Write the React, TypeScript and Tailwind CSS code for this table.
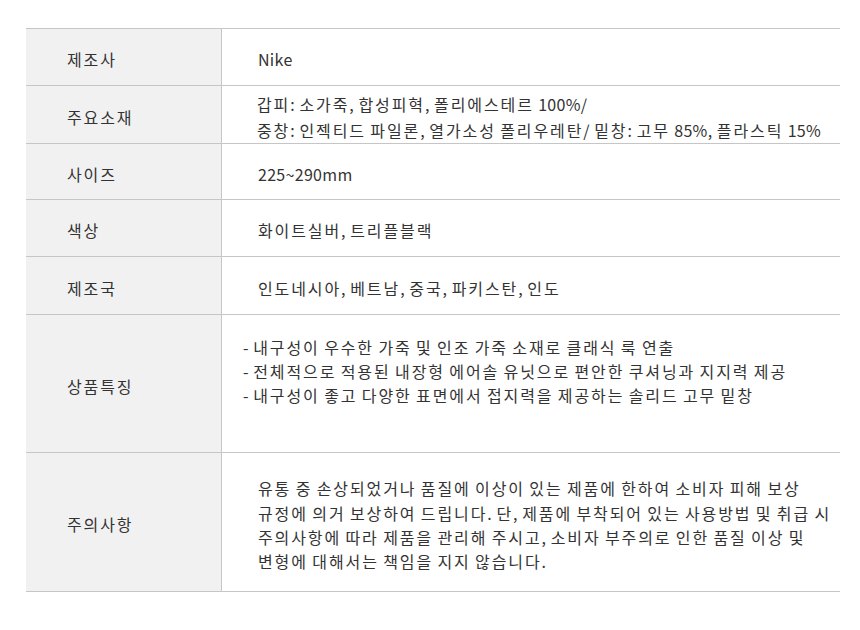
import React from 'react';

// 한글 글자만 자간을 넓혀 원본 폰트의 글자폭에 맞춘다
const Kr = ({ text }: { text: string }) => (
    <>
        {text.split(/([가-힣]+)/).map((part, i) =>
            /[가-힣]/.test(part) ? (
                <span key={i} className="tracking-[1.9px]">{part}</span>
            ) : (
                part
            )
        )}
    </>
);

type Row = {
    label: string;
    h: string;
    content: React.ReactNode;
};

const rows: Row[] = [
    { label: '제조사', h: 'h-[57px]', content: <p className="pl-[36px] pt-[4px]">Nike</p> },
    {
        label: '주요소재',
        h: 'h-[58px]',
        content: (
            <div className="pl-[35px] pt-[4px] leading-[26px]">
                <p><Kr text="갑피: 소가죽, 합성피혁, 폴리에스테르 100%/" /></p>
                <p><Kr text="중창: 인젝티드 파일론, 열가소성 폴리우레탄/ 밑창: 고무 85%, 플라스틱 15%" /></p>
            </div>
        ),
    },
    { label: '사이즈', h: 'h-[56px]', content: <p className="pl-[36px] pt-[4px]">225~290mm</p> },
    { label: '색상', h: 'h-[57px]', content: <p className="pl-[36px] pt-[4px]"><Kr text="화이트실버, 트리플블랙" /></p> },
    {
        label: '제조국',
        h: 'h-[58px]',
        content: <p className="pl-[36px] pt-[4px]"><Kr text="인도네시아, 베트남, 중국, 파키스탄, 인도" /></p>,
    },
    {
        label: '상품특징',
        h: 'h-[138px]',
        content: (
            <div className="self-start pl-[21px] pt-[20px] leading-[24px]">
                <p><Kr text="- 내구성이 우수한 가죽 및 인조 가죽 소재로 클래식 룩 연출" /></p>
                <p><Kr text="- 전체적으로 적용된 내장형 에어솔 유닛으로 편안한 쿠셔닝과 지지력 제공" /></p>
                <p><Kr text="- 내구성이 좋고 다양한 표면에서 접지력을 제공하는 솔리드 고무 밑창" /></p>
            </div>
        ),
    },
    {
        label: '주의사항',
        h: 'h-[139px]',
        content: (
            <div className="pl-[36px] pt-[6px] leading-[24.3px]">
                <p><Kr text="유통 중 손상되었거나 품질에 이상이 있는 제품에 한하여 소비자 피해 보상" /></p>
                <p><Kr text="규정에 의거 보상하여 드립니다. 단, 제품에 부착되어 있는 사용방법 및 취급 시" /></p>
                <p><Kr text="주의사항에 따라 제품을 관리해 주시고, 소비자 부주의로 인한 품질 이상 및" /></p>
                <p><Kr text="변형에 대해서는 책임을 지지 않습니다." /></p>
            </div>
        ),
    },
];

export default function App() {
    return (
        <div
            className="w-[860px] h-[630px] bg-white pt-[28px] pl-[26px] text-[#333] text-[16px] tracking-[0.3px] [word-spacing:0.5px]"
            style={{ fontFamily: '"Noto Sans CJK KR", "Noto Sans", sans-serif' }}
        >
            {/* 상품정보 고시 표 */}
            <div className="w-[814px] border-t border-[#c6c6c6]">
                {rows.map((row) => (
                    <div key={row.label} className={`flex border-b border-[#c6c6c6] ${row.h}`}>
                        <div className="w-[196px] shrink-0 bg-[#f1f1f1] border-r border-[#c6c6c6] flex items-center pl-[41px] pt-[4px]">
                            <Kr text={row.label} />
                        </div>
                        <div className="flex-1 flex items-center whitespace-nowrap">{row.content}</div>
                    </div>
                ))}
            </div>
        </div>
    );
}
